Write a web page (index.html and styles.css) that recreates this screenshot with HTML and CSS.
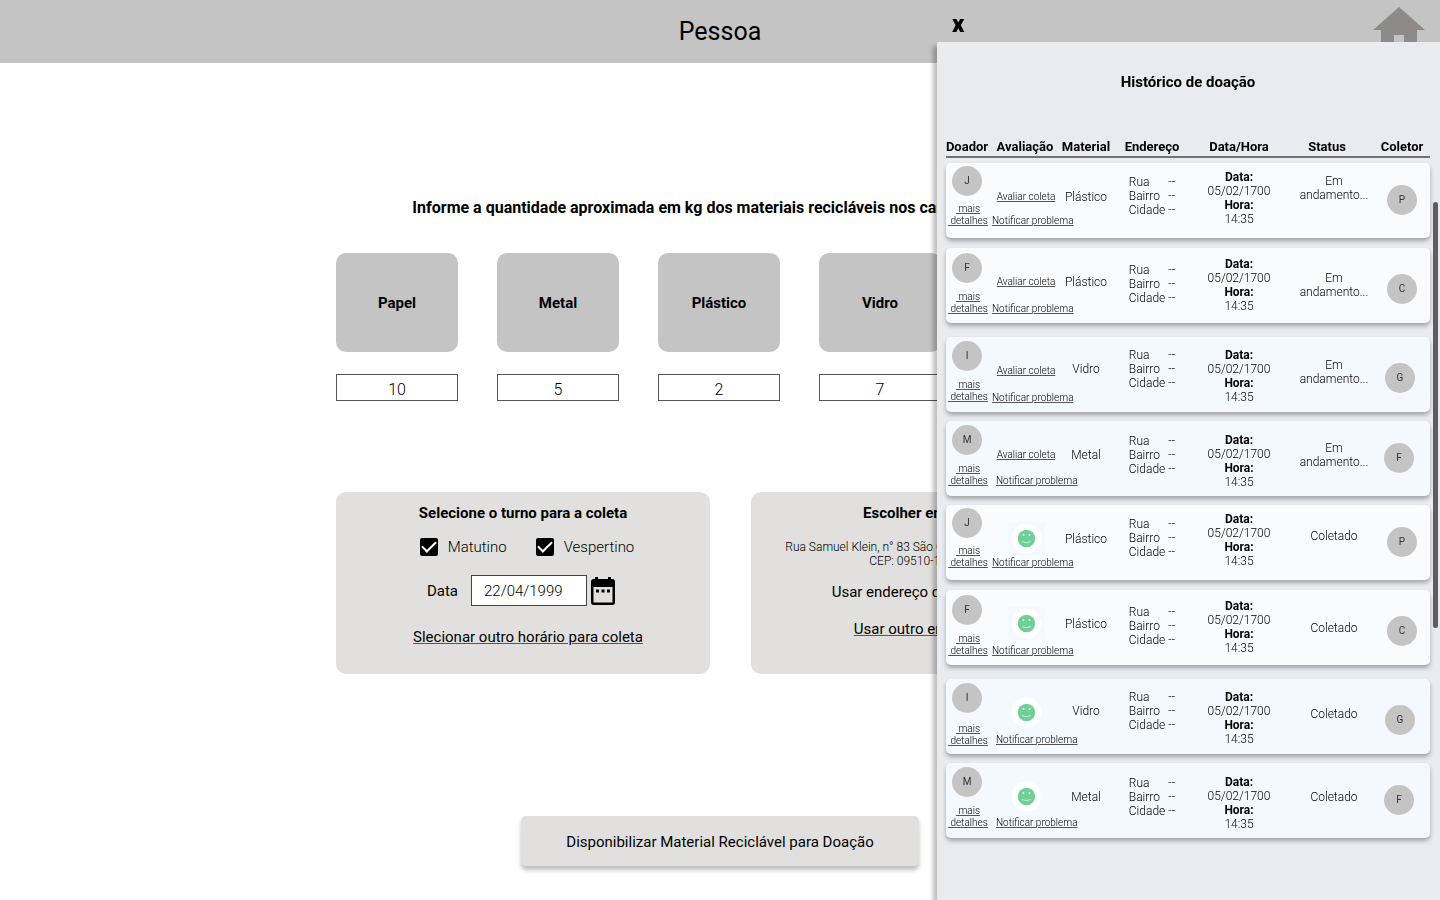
FILE: index.html
```html
<!DOCTYPE html>
<html lang="pt-BR">
<head>
<meta charset="utf-8">
<title>Pessoa</title>
<link rel="stylesheet" href="styles.css">
</head>
<body>
<svg class="sprite" aria-hidden="true">
  <symbol id="smile" viewBox="0 0 37 33">
    <rect width="37" height="33" fill="#f4f8ff"/>
    <circle cx="18.500" cy="16.500" r="15" fill="#fff"/>
    <circle cx="18.500" cy="16.500" r="8.700" fill="#6fcf97"/>
    <circle cx="15.500" cy="13" r="1" fill="#e8f8ef"/>
    <circle cx="21.500" cy="13" r="1" fill="#e8f8ef"/>
    <path d="M14 19.500q4.500 2.400 9 0" fill="none" stroke="#c9efd8" stroke-width="1"/>
  </symbol>
</svg>
<header class="topbar">
  <h1>Pessoa</h1>
  <a class="home" href="#" aria-label="Início">
    <svg viewBox="0 0 52 45" width="52" height="45"><path d="M26 0L52 23H44V45H31V28H21V45H8V23H0Z" fill="#8e8a89"/></svg>
  </a>
</header>
<main class="content">
  <h2 class="lead">Informe a quantidade aproximada em kg dos materiais recicláveis nos campos abaixo</h2>
  <div class="materials">
    <div class="material"><label class="tile" for="papel">Papel</label><input id="papel" value="10"></div>
    <div class="material"><label class="tile" for="metal">Metal</label><input id="metal" value="5"></div>
    <div class="material"><label class="tile" for="plastico">Plástico</label><input id="plastico" value="2"></div>
    <div class="material"><label class="tile" for="vidro">Vidro</label><input id="vidro" value="7"></div>
  </div>
  <div class="panels">
    <section class="panel">
      <h3>Selecione o turno para a coleta</h3>
      <div class="shifts">
        <label><input type="checkbox" checked>Matutino</label>
        <label><input type="checkbox" checked>Vespertino</label>
      </div>
      <div class="date">
        <label for="data">Data</label>
        <input id="data" value="22/04/1999">
        <button class="calendar" aria-label="Abrir calendário">
          <svg viewBox="0 0 24 28" width="24" height="28"><path fill="#000" fill-rule="evenodd" d="M4 0H7V2H17V0H20V2H21.500Q24 2 24 5V25Q24 28 21.500 28H2.500Q0 28 0 25V5Q0 2 2.500 2H4ZM2.500 10V25.500H21.500V10ZM5 12.500H8V15.500H5ZM10.500 12.500H13.500V15.500H10.500ZM16 12.500H19V15.500H16Z"/></svg>
        </button>
      </div>
      <a class="other-time" href="#">Slecionar outro horário para coleta</a>
    </section>
    <section class="panel delivery">
      <h3>Escolher endereço</h3>
      <p class="address">Rua Samuel Klein, n° 83 São Caetano do Sul - SP, BR<br>CEP: 09510-125, BR</p>
      <p class="saved">Usar endereço do cadastro</p>
      <a class="other-address" href="#">Usar outro endereço</a>
    </section>
  </div>
  <button class="submit">Disponibilizar Material Reciclável para Doação</button>
</main>

<aside class="drawer">
  <div class="drawer-bar"><button class="close" aria-label="Fechar">x</button></div>
  <div class="drawer-body">
    <h2>Histórico de doação</h2>
    <table>
      <thead>
        <tr><th>Doador</th><th>Avaliação</th><th>Material</th><th>Endereço</th><th>Data/Hora</th><th class="status-head">Status</th><th>Coletor</th></tr>
      </thead>
      <tbody>
        <tr class="row-j">
          <td class="donor"><span class="avatar">J</span><a href="#">&nbsp;mais<br>&nbsp;detalhes</a></td>
          <td class="rating"><div class="slot"><a href="#">Avaliar coleta</a></div><a href="#">Notificar problema</a></td>
          <td class="kind">Plástico</td>
          <td class="place"><div><span>Rua</span><span>--</span><span>Bairro</span><span>--</span><span>Cidade</span><span>--</span></div></td>
          <td class="when"><b>Data:</b><br>05/02/1700<br><b>Hora:</b><br>14:35</td>
          <td class="state">Em<br>andamento...</td>
          <td class="collector"><span class="avatar">P</span></td>
        </tr>
        <tr class="row-f">
          <td class="donor"><span class="avatar">F</span><a href="#">&nbsp;mais<br>&nbsp;detalhes</a></td>
          <td class="rating"><div class="slot"><a href="#">Avaliar coleta</a></div><a href="#">Notificar problema</a></td>
          <td class="kind">Plástico</td>
          <td class="place"><div><span>Rua</span><span>--</span><span>Bairro</span><span>--</span><span>Cidade</span><span>--</span></div></td>
          <td class="when"><b>Data:</b><br>05/02/1700<br><b>Hora:</b><br>14:35</td>
          <td class="state">Em<br>andamento...</td>
          <td class="collector"><span class="avatar">C</span></td>
        </tr>
        <tr class="row-i">
          <td class="donor"><span class="avatar">I</span><a href="#">&nbsp;mais<br>&nbsp;detalhes</a></td>
          <td class="rating"><div class="slot"><a href="#">Avaliar coleta</a></div><a href="#">Notificar problema</a></td>
          <td class="kind">Vidro</td>
          <td class="place"><div><span>Rua</span><span>--</span><span>Bairro</span><span>--</span><span>Cidade</span><span>--</span></div></td>
          <td class="when"><b>Data:</b><br>05/02/1700<br><b>Hora:</b><br>14:35</td>
          <td class="state">Em<br>andamento...</td>
          <td class="collector"><span class="avatar">G</span></td>
        </tr>
        <tr class="row-m">
          <td class="donor"><span class="avatar">M</span><a href="#">&nbsp;mais<br>&nbsp;detalhes</a></td>
          <td class="rating"><div class="slot"><a href="#">Avaliar coleta</a></div><a href="#">Notificar problema</a></td>
          <td class="kind">Metal</td>
          <td class="place"><div><span>Rua</span><span>--</span><span>Bairro</span><span>--</span><span>Cidade</span><span>--</span></div></td>
          <td class="when"><b>Data:</b><br>05/02/1700<br><b>Hora:</b><br>14:35</td>
          <td class="state">Em<br>andamento...</td>
          <td class="collector"><span class="avatar">F</span></td>
        </tr>
        <tr class="row-j">
          <td class="donor"><span class="avatar">J</span><a href="#">&nbsp;mais<br>&nbsp;detalhes</a></td>
          <td class="rating"><div class="slot"><svg width="37" height="33"><use href="#smile"/></svg></div><a href="#">Notificar problema</a></td>
          <td class="kind">Plástico</td>
          <td class="place"><div><span>Rua</span><span>--</span><span>Bairro</span><span>--</span><span>Cidade</span><span>--</span></div></td>
          <td class="when"><b>Data:</b><br>05/02/1700<br><b>Hora:</b><br>14:35</td>
          <td class="state done">Coletado</td>
          <td class="collector"><span class="avatar">P</span></td>
        </tr>
        <tr class="row-f">
          <td class="donor"><span class="avatar">F</span><a href="#">&nbsp;mais<br>&nbsp;detalhes</a></td>
          <td class="rating"><div class="slot"><svg width="37" height="33"><use href="#smile"/></svg></div><a href="#">Notificar problema</a></td>
          <td class="kind">Plástico</td>
          <td class="place"><div><span>Rua</span><span>--</span><span>Bairro</span><span>--</span><span>Cidade</span><span>--</span></div></td>
          <td class="when"><b>Data:</b><br>05/02/1700<br><b>Hora:</b><br>14:35</td>
          <td class="state done">Coletado</td>
          <td class="collector"><span class="avatar">C</span></td>
        </tr>
        <tr class="row-i rated">
          <td class="donor"><span class="avatar">I</span><a href="#">&nbsp;mais<br>&nbsp;detalhes</a></td>
          <td class="rating"><div class="slot"><svg width="37" height="33"><use href="#smile"/></svg></div><a href="#">Notificar problema</a></td>
          <td class="kind">Vidro</td>
          <td class="place"><div><span>Rua</span><span>--</span><span>Bairro</span><span>--</span><span>Cidade</span><span>--</span></div></td>
          <td class="when"><b>Data:</b><br>05/02/1700<br><b>Hora:</b><br>14:35</td>
          <td class="state done">Coletado</td>
          <td class="collector"><span class="avatar">G</span></td>
        </tr>
        <tr class="row-m">
          <td class="donor"><span class="avatar">M</span><a href="#">&nbsp;mais<br>&nbsp;detalhes</a></td>
          <td class="rating"><div class="slot"><svg width="37" height="33"><use href="#smile"/></svg></div><a href="#">Notificar problema</a></td>
          <td class="kind">Metal</td>
          <td class="place"><div><span>Rua</span><span>--</span><span>Bairro</span><span>--</span><span>Cidade</span><span>--</span></div></td>
          <td class="when"><b>Data:</b><br>05/02/1700<br><b>Hora:</b><br>14:35</td>
          <td class="state done">Coletado</td>
          <td class="collector"><span class="avatar">F</span></td>
        </tr>
      </tbody>
    </table>
    <div class="scroll-thumb"></div>
  </div>
</aside>
</body>
</html>
```
FILE: styles.css
```css
* { box-sizing: border-box; }
body {
  margin: 0;
  min-height: 100vh;
  background: #fff;
  color: #000;
  font-family: Roboto, "Liberation Sans", sans-serif;
  font-size: 15px;
  line-height: 20px;
}
h1, h2, h3, p { margin: 0; }
a { color: inherit; text-decoration-color: #555; }
input, button { font: inherit; color: inherit; border-radius: 0; }
button { border: 0; padding: 0; background: none; cursor: pointer; }
.sprite { position: absolute; width: 0; height: 0; }

/* Top bar */
.topbar {
  display: grid;
  grid-template-columns: 1fr auto 1fr;
  height: 63px;
  padding: 0 15px;
  align-items: center;
  background: #c4c4c4;
}
.topbar h1 { grid-column: 2; font-size: 25px; line-height: 30px; font-weight: 400; }
.home { justify-self: end; align-self: start; padding-top: 7px; }
.home svg { display: block; }

/* Form */
.content {
  width: 768px;
  max-width: 100%;
  margin: 0 auto;
  padding: 135px 0 34px;
  display: flex;
  flex-direction: column;
}
.lead { font-size: 16px; line-height: 20px; font-weight: 700; text-align: center; white-space: nowrap; }
.materials {
  display: grid;
  grid-template-columns: repeat(4, 122px);
  gap: 39px;
  margin-top: 35px;
}
.material { display: flex; flex-direction: column; gap: 22px; }
.tile {
  display: flex;
  height: 99px;
  align-items: center;
  justify-content: center;
  border-radius: 10px;
  background: #c4c4c4;
  font-weight: 700;
}
.material input {
  width: 100%;
  height: 27px;
  padding: 4px 0 0;
  border: 1px solid #555;
  background: #fff;
  text-align: center;
  font-size: 16px;
  font-weight: 300;
}
.panels {
  display: grid;
  grid-template-columns: 374fr 353fr;
  gap: 41px;
  margin-top: 91px;
}
.panel {
  display: flex;
  flex-direction: column;
  align-items: center;
  padding: 11px 0 27px;
  border-radius: 10px;
  background: #e1e0de;
  text-align: center;
}
.panel h3 { font-size: 15px; font-weight: 700; }
.delivery { padding-right: 4px; }
.delivery p, .delivery a { margin-right: 8px; }
.shifts { display: flex; gap: 29px; margin-top: 14px; padding-left: 8px; font-weight: 300; }
.shifts label { display: flex; align-items: center; gap: 10px; }
.shifts input {
  appearance: none;
  display: grid;
  place-items: center;
  width: 18px;
  height: 18px;
  margin: 0;
  border-radius: 2px;
  background: #000;
}
.shifts input:checked::after {
  content: "";
  width: 12px;
  height: 6px;
  margin-bottom: 4px;
  border: solid #fff;
  border-width: 0 0 2px 2px;
  transform: rotate(-45deg);
}
.date { display: flex; align-items: center; margin-top: 18px; padding-right: 4px; }
.date input {
  width: 116px;
  height: 31px;
  margin: 0 4px 0 13px;
  padding: 0 12px;
  border: 1px solid #444;
  background: #fff;
  font-weight: 300;
}
.calendar svg { display: block; }
.other-time { margin-top: 21px; padding-left: 10px; }
.address { margin-top: 17px; font-size: 12px; line-height: 14px; font-weight: 300; white-space: nowrap; }
.saved { margin-top: 14px; }
.other-address { margin-top: 17px; }
.submit {
  align-self: center;
  height: 50px;
  margin-top: 142px;
  padding: 2px 45px 0;
  border-radius: 5px;
  background: #e1e0de;
  box-shadow: 0 4px 4px rgba(0, 0, 0, .25);
}

/* History drawer, over the page */
.drawer {
  position: fixed;
  top: 0;
  right: 0;
  bottom: 0;
  width: 503px;
  display: flex;
  flex-direction: column;
}
.drawer-bar { display: flex; height: 42px; align-items: center; padding: 6px 15px 0; }
.close { font-size: 24px; line-height: 24px; font-weight: 900; }
.drawer-body {
  position: relative;
  flex: 1;
  padding: 31px 10px 0 9px;
  background: #e8ebf0;
  box-shadow: -4px 4px 4px rgba(0, 0, 0, .25);
}
.drawer-body h2 { font-size: 15px; line-height: 18px; font-weight: 700; text-align: center; }
.scroll-thumb {
  position: absolute;
  top: 160px;
  right: 2px;
  width: 5px;
  height: 426px;
  border-radius: 3px;
  background: #5f5d61;
}
table { display: block; margin-top: 46px; }
thead, tbody { display: block; }
tr {
  display: grid;
  grid-template-columns:
    minmax(0, 42fr) minmax(0, 74fr) minmax(0, 48fr) minmax(0, 84fr)
    minmax(0, 90fr) minmax(0, 96fr) minmax(0, 44fr);
  padding-right: 6px;
}
thead tr { border-bottom: 2px solid #6f7371; margin-bottom: 5px; }
th {
  display: flex;
  justify-content: center;
  padding: 0;
  font-size: 13px;
  line-height: 19px;
  font-weight: 700;
  white-space: nowrap;
}
.status-head { padding-right: 10px; }
td { padding: 0; font-size: 12px; line-height: 14px; font-weight: 300; white-space: nowrap; text-align: center; }
tbody tr {
  height: 75px;
  border-radius: 5px;
  background: #f9fcff;
  box-shadow: 0 3px 4px rgba(0, 0, 0, .3);
}
td a { display: block; font-size: 10px; line-height: 12px; }
td b { font-weight: 700; }

/* Vertical rhythm of each kind of row */
.row-j { --donor: 3px; --more: 7px; --notify: 2px; --kind: 27px; --place: 12px; --when: 7px; --state: 11px; --done: 24px; --collector: 22px; margin-bottom: 10px; }
.row-f { --donor: 5px; --more: 8px; --notify: 5px; --kind: 27px; --place: 15px; --when: 9px; --state: 23px; --done: 31px; --collector: 26px; margin-bottom: 14px; }
.row-i { --donor: 4px; --more: 8px; --notify: 5px; --kind: 25px; --place: 11px; --when: 11px; --state: 21px; --done: 28px; --collector: 26px; --inset: 4px; margin-bottom: 9px; }
.row-m { --donor: 4px; --more: 8px; --notify: 4px; --notify-inset: 4px; --kind: 27px; --place: 13px; --when: 12px; --state: 20px; --done: 27px; --collector: 22px; --inset: 6px; margin-bottom: 9px; }
.rated { --notify-inset: 4px; --more: 10px; }
tbody .row-i, tbody .row-m { background: #f4f8ff; }

.avatar {
  display: flex;
  width: 30px;
  height: 30px;
  align-items: center;
  justify-content: center;
  border-radius: 50%;
  background: #c4c4c4;
  font-size: 10px;
  font-weight: 400;
  color: #333;
}
.donor { display: flex; flex-direction: column; align-items: center; gap: var(--more); padding-top: var(--donor); }
.donor a { padding-left: 2px; }
.rating { padding: 17px 0 0 4px; }
.rating > a { margin-top: var(--notify); padding-left: var(--notify-inset, 0); text-align: left; }
.slot { display: flex; height: 33px; align-items: center; justify-content: center; padding-right: 2px; }
.slot svg { display: block; flex: none; }
.kind { padding-top: var(--kind); }
.place { display: flex; justify-content: center; align-items: start; padding-top: var(--place); }
.place div { display: grid; grid-template-columns: auto auto; column-gap: 3px; text-align: left; }
.when { padding-top: var(--when); }
.state { padding-top: var(--state); padding-left: 4px; }
.done { padding-top: var(--done); }
.collector { display: flex; justify-content: center; align-items: start; padding-top: var(--collector); padding-right: var(--inset, 0); }
```
